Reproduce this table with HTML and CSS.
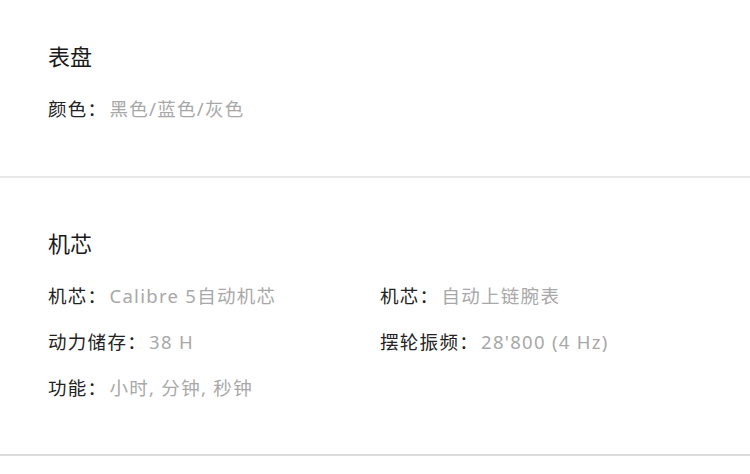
FILE: index.html
```html
<!DOCTYPE html>
<html lang="zh">
<head>
<meta charset="utf-8">
<link rel="stylesheet" href="styles.css">
</head>
<body>
<section class="spec spec--first">
  <h2 class="spec__title">表盘</h2>
  <div class="spec__grid">
    <div class="spec__row"><span class="spec__label">颜色：</span><span class="spec__value">黑色/蓝色/灰色</span></div>
  </div>
</section>
<section class="spec spec--second">
  <h2 class="spec__title">机芯</h2>
  <div class="spec__grid">
    <div class="spec__row"><span class="spec__label">机芯：</span><span class="spec__value">Calibre 5自动机芯</span></div>
    <div class="spec__row"><span class="spec__label">机芯：</span><span class="spec__value">自动上链腕表</span></div>
    <div class="spec__row"><span class="spec__label">动力储存：</span><span class="spec__value">38 H</span></div>
    <div class="spec__row"><span class="spec__label">摆轮振频：</span><span class="spec__value">28'800 (4 Hz)</span></div>
    <div class="spec__row"><span class="spec__label">功能：</span><span class="spec__value">小时, 分钟, 秒钟</span></div>
  </div>
</section>
</body>
</html>
```

FILE: styles.css
```css
html, body {
  margin: 0;
  padding: 0;
  background: #ffffff;
}
body {
  width: 750px;
  font-family: "Noto Sans", "Noto Sans CJK SC", sans-serif;
  color: #222222;
}
.spec {
  padding: 0 40px 44px 48px;
  border-bottom: 2px solid #e8e8e8;
}
.spec--first {
  padding-top: 41px;
}
.spec--second {
  padding-top: 50px;
  padding-bottom: 43px;
  border-bottom-color: #dcdcdc;
}
.spec__title {
  margin: 0 0 15px;
  font-size: 22px;
  line-height: 30px;
  font-weight: 400;
  color: #1a1a1a;
}
.spec__grid {
  display: grid;
  grid-template-columns: 332px 1fr;
}
.spec__row {
  font-size: 18.5px;
  line-height: 46px;
  letter-spacing: 1.3px;
  white-space: nowrap;
}
.spec__label {
  color: #222222;
  margin-right: 2px;
}
.spec__value {
  color: #a8a8a8;
}
```
